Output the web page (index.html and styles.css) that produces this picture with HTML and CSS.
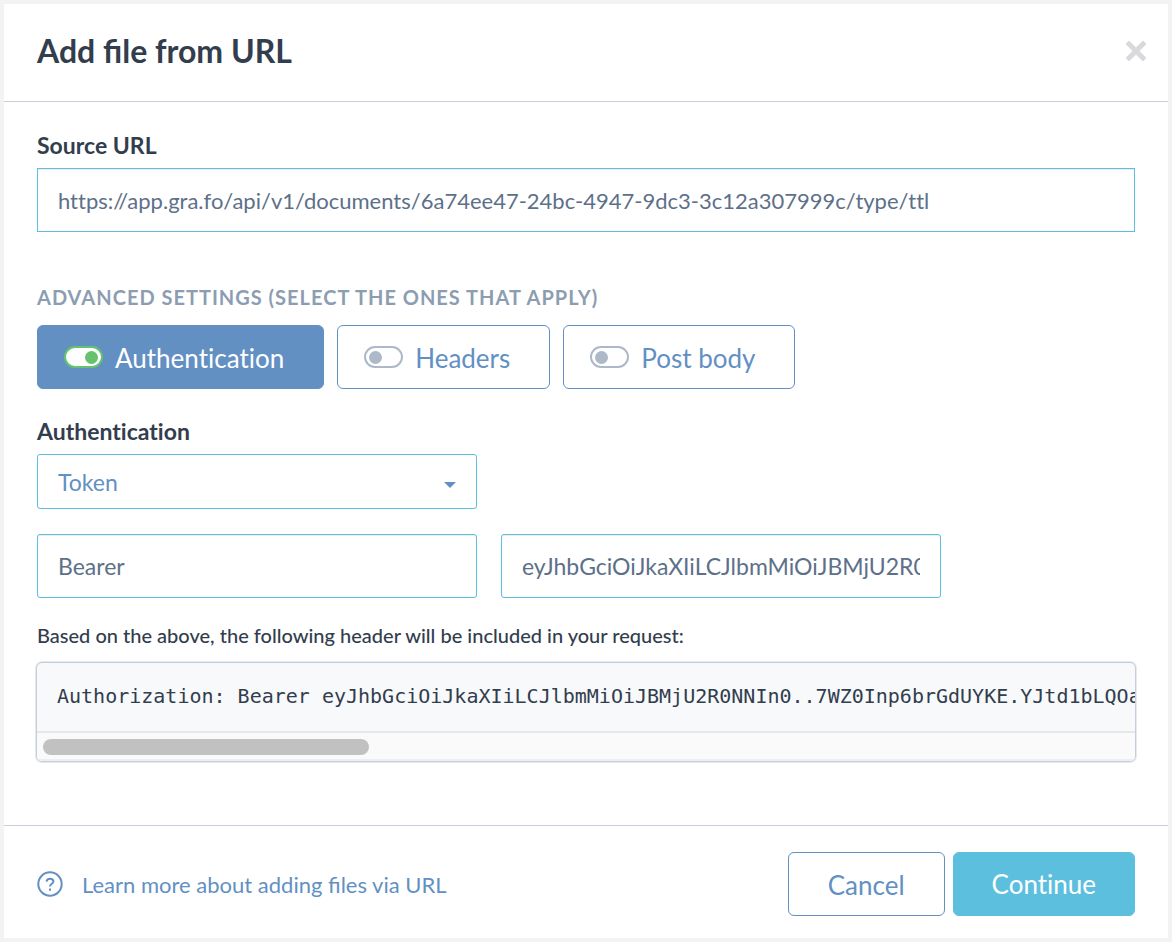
FILE: index.html
```html
<!DOCTYPE html>
<html lang="en">
<head>
    <meta charset="UTF-8">
    <meta name="viewport" content="width=device-width, initial-scale=1">
    <title>Add file from URL</title>
    <link rel="stylesheet" href="styles.css">
</head>
<body>
<form class="modal">
    <header class="modal-header">
        <h1>Add file from URL</h1>
        <button type="button" class="close" aria-label="Close">
            <svg width="20" height="20" viewBox="0 0 20 20">
                <path d="M3 3L17 17M17 3L3 17" stroke="currentColor" stroke-width="5" stroke-linecap="square"/>
            </svg>
        </button>
    </header>
    <main class="modal-body">
        <label class="label" for="url">Source URL</label>
        <input class="field field-url" id="url" type="text" value="https://app.gra.fo/api/v1/documents/6a74ee47-24bc-4947-9dc3-3c12a307999c/type/ttl">

        <h2>Advanced settings (select the ones that apply)</h2>
        <div class="toggles">
            <label class="toggle on"><input type="checkbox" checked>Authentication</label>
            <label class="toggle"><input type="checkbox">Headers</label>
            <label class="toggle"><input type="checkbox">Post body</label>
        </div>

        <label class="label" for="auth">Authentication</label>
        <select class="field select" id="auth">
            <option>Token</option>
            <option>Basic</option>
        </select>
        <div class="fields">
            <input class="field" type="text" value="Bearer" aria-label="Token prefix">
            <input class="field" type="text" value="eyJhbGciOiJkaXIiLCJlbmMiOiJBMjU2R0NNIn0..7WZ0Inp6brGdUYKE" aria-label="Token">
        </div>

        <p class="hint">Based on the above, the following header will be included in your request:</p>
        <div class="preview">
            <pre>Authorization: Bearer eyJhbGciOiJkaXIiLCJlbmMiOiJBMjU2R0NNIn0..7WZ0Inp6brGdUYKE.YJtd1bLQOaui</pre>
            <div class="scrollbar"><div class="thumb"></div></div>
        </div>
    </main>
    <footer class="modal-footer">
        <a class="help" href="#">
            <svg width="26" height="26" viewBox="0 0 26 26" fill="none" stroke="currentColor" stroke-width="2">
                <circle cx="13" cy="13" r="11.7"/>
                <path d="M9.6 10.6C9.7 8.7 11.1 7.7 13 7.7C15 7.7 16.4 8.8 16.4 10.5C16.4 12.7 13 12.8 13 15.4"/>
                <path d="M13 17.6V19.8"/>
            </svg>
            Learn more about adding files via URL
        </a>
        <button type="button" class="btn">Cancel</button>
        <button type="submit" class="btn btn-primary">Continue</button>
    </footer>
</form>
</body>
</html>
```

FILE: styles.css
```css
*{
    margin: 0;
    padding: 0;
    box-sizing: border-box;
}
body{
    padding: 4px;
    background: #f3f3f3;
    color: #323d4d;
    font-family: Lato, "Liberation Sans", sans-serif;
    font-variant-ligatures: none;
}
input,select,button{
    font-family: inherit;
    font-variant-ligatures: none;
}
.modal{
    background: #fff;
}
.modal-header{
    display: flex;
    align-items: center;
    justify-content: space-between;
    padding: 27px 22px 31px 33px;
    border-bottom: 1px solid #c5d0dc;
}
h1{
    font-size: 32px;
    line-height: 39px;
    font-weight: 700;
    font-variant-ligatures: common-ligatures;
}
.close{
    width: 20px;
    height: 20px;
    border: none;
    background: none;
    color: #d7d9dc;
}
.close svg{
    display: block;
}
.modal-body{
    padding: 28px 33px 63px;
}
.label{
    display: block;
    font-size: 23px;
    line-height: 30px;
    font-weight: 700;
    margin-bottom: 8px;
}
.field{
    display: block;
    width: 440px;
    height: 64px;
    padding: 0 20px;
    border: 1px solid #5bc0de;
    border-radius: 3px;
    background: #fff;
    box-shadow: inset 0 1px 1px rgba(0,0,0,.08);
    color: #5d7089;
    font-size: 23px;
}
.field-url{
    width: 100%;
    border-radius: 0;
    font-size: 22px;
}
.select{
    height: 55px;
    appearance: none;
    box-shadow: none;
    color: #6290c3;
    background: #fff url("data:image/svg+xml,%3Csvg xmlns='http://www.w3.org/2000/svg' width='12' height='6'%3E%3Cpath d='M0 0h12L6 6z' fill='%236290c3'/%3E%3C/svg%3E") no-repeat right 20px top 27px;
}
h2{
    margin: 52px 0 15px;
    font-size: 20px;
    line-height: 26px;
    font-weight: 700;
    letter-spacing: 1px;
    text-transform: uppercase;
    color: #8c9db2;
}
.toggles{
    display: flex;
    gap: 13px;
    margin-bottom: 27px;
}
.toggle{
    display: flex;
    align-items: center;
    gap: 12px;
    height: 64px;
    padding: 2px 39px 0 26px;
    border: 1px solid #6290c3;
    border-radius: 6px;
    color: #6290c3;
    font-size: 26px;
}
.toggle input{
    appearance: none;
    display: flex;
    align-items: center;
    width: 39px;
    height: 22px;
    margin-bottom: 2px;
    padding: 0 3px;
    border: 2px solid #adb9c9;
    border-radius: 11px;
    background: #fff;
}
.toggle input::before{
    content: "";
    width: 13px;
    height: 13px;
    border-radius: 50%;
    background: #adb9c9;
}
.toggle.on{
    background: #6290c3;
    color: #fff;
}
.toggle.on input{
    justify-content: flex-end;
    border-color: #67c270;
}
.toggle.on input::before{
    background: #67c270;
}
.fields{
    display: flex;
    gap: 24px;
    margin-top: 25px;
}
.hint{
    margin: 23px 0 12px;
    font-size: 20px;
    line-height: 29px;
    font-weight: 500;
}
.preview{
    margin: 0 -1px;
    overflow: hidden;
    border: 1px solid #c5cfdb;
    border-radius: 6px;
    box-shadow: 0 0 0 1px #e6eaf0;
    background: #f8f9fb;
}
.preview pre{
    overflow: hidden;
    padding: 18px 0 20px 20px;
    font-family: "DejaVu Sans Mono", monospace;
    font-size: 20px;
    line-height: 30px;
}
.scrollbar{
    padding: 6px 6px 4px;
    border-top: 2px solid #e5e7e9;
    border-bottom: 2px solid #eee;
    background: #fafafa;
}
.thumb{
    width: 30%;
    height: 16px;
    border-radius: 8px;
    background: #c1c1c1;
}
.modal-footer{
    display: flex;
    align-items: center;
    gap: 8px;
    padding: 26px 33px 22px;
    border-top: 1px solid #c5d0dc;
}
.help{
    display: flex;
    align-items: center;
    gap: 19px;
    margin-right: auto;
    color: #6290c3;
    font-size: 22px;
    font-variant-ligatures: common-ligatures;
    text-decoration: none;
}
.btn{
    height: 64px;
    padding: 2px 39px 0;
    border: 1px solid #6290c3;
    border-radius: 6px;
    background: #fff;
    color: #6290c3;
    font-size: 26px;
}
.btn-primary{
    padding: 0 38px;
    border-color: #5dbfde;
    background: #5dbfde;
    color: #fff;
}
```
